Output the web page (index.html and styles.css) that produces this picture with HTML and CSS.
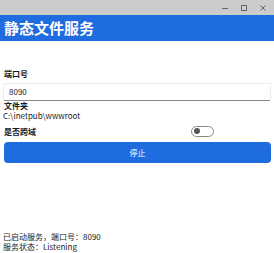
FILE: index.html
```html
<!DOCTYPE html>
<html lang="zh">
<head>
<meta charset="utf-8">
<link rel="stylesheet" href="styles.css">
</head>
<body>
<div class="window">
  <div class="titlebar">
    <span class="ctl">
      <svg width="8" height="8" viewBox="0 0 8 8"><path d="M1 4.5h6" stroke="#666" stroke-width="1"/></svg>
    </span>
    <span class="ctl">
      <svg width="8" height="8" viewBox="0 0 8 8"><rect x="1.5" y="1.5" width="5" height="5" fill="none" stroke="#666" stroke-width="1"/></svg>
    </span>
    <span class="ctl">
      <svg width="8" height="8" viewBox="0 0 8 8"><path d="M1.5 1.5l5 5M6.5 1.5l-5 5" stroke="#666" stroke-width="1"/></svg>
    </span>
  </div>
  <div class="header">静态文件服务</div>
  <div class="content">
    <div class="label">端口号</div>
    <div class="input">8090</div>
    <div class="label tight">文件夹</div>
    <div class="path">C:\inetpub\wwwroot</div>
    <div class="row">
      <div class="label">是否跨域</div>
      <div class="toggle"><span class="knob"></span></div>
    </div>
    <button class="btn">停止</button>
  </div>
  <div class="status">
    <div>已启动服务，端口号：8090</div>
    <div>服务状态：Listening</div>
  </div>
</div>
</body>
</html>
```
FILE: styles.css
```css
html, body {
  margin: 0;
  padding: 0;
  background: #ffffff;
}
body {
  font-family: "Noto Sans CJK SC", "Noto Sans", sans-serif;
  color: #1a1a1a;
}
.window {
  width: 274px;
  height: 253px;
  display: flex;
  flex-direction: column;
  overflow: hidden;
}
.titlebar {
  height: 15px;
  background: #cccccc;
  display: flex;
  justify-content: flex-end;
  align-items: center;
  padding-right: 2px;
}
.ctl {
  width: 19px;
  height: 15px;
  display: flex;
  align-items: center;
  justify-content: center;
}
.header {
  height: 26px;
  background: #1f6be0;
  color: #ffffff;
  font-weight: 700;
  font-size: 15px;
  line-height: 26px;
  padding-left: 4px;
}
.content {
  padding: 0 3px;
  display: flex;
  flex-direction: column;
  margin-top: 27px;
}
.label {
  font-size: 8px;
  font-weight: 700;
  line-height: 11px;
  padding-left: 1px;
}
.label.tight {
  line-height: 10px;
}
.input {
  margin-top: 4px;
  height: 16px;
  border: 1px solid #ececec;
  border-bottom: 1px solid #8a8a8a;
  border-radius: 2px;
  font-size: 8px;
  line-height: 16px;
  padding-left: 5px;
}
.path {
  font-size: 8px;
  line-height: 10px;
}
.row {
  display: flex;
  align-items: center;
  margin-top: 4px;
  height: 12px;
}
.row .label { width: 187px; }
.toggle {
  width: 19px;
  height: 9px;
  border: 1px solid #8a8a8a;
  border-radius: 6px;
  display: flex;
  align-items: center;
  padding-left: 2px;
}
.knob {
  width: 6px;
  height: 6px;
  border-radius: 50%;
  background: #555555;
}
.btn {
  margin-top: 5px;
  margin-left: 1px;
  width: 267px;
  height: 21px;
  border: none;
  border-radius: 4px;
  background: #1f6be0;
  color: #ffffff;
  font-family: "Noto Sans CJK SC", "Noto Sans", sans-serif;
  font-size: 8px;
  padding: 0;
}
.status {
  margin-top: auto;
  margin-bottom: 1px;
  padding-left: 3px;
  font-size: 8px;
  line-height: 10px;
}
```
